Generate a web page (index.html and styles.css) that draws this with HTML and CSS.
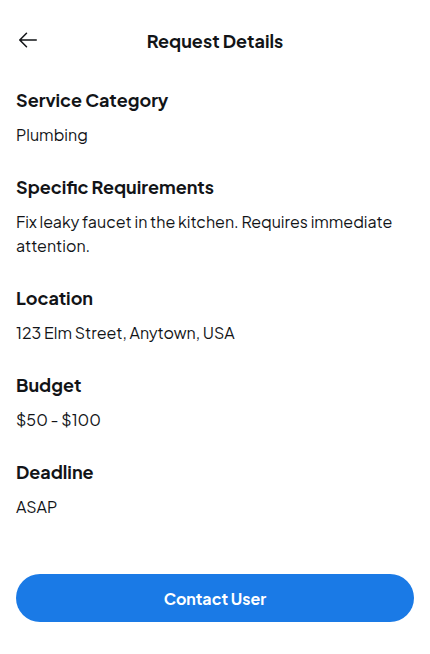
FILE: index.html
```html
<!DOCTYPE html>
<html lang="en">
<head>
<meta charset="utf-8">
<title>Request Details</title>
<link rel="stylesheet" href="styles.css">
</head>
<body>
<div class="page">
  <div class="main">
    <header class="header">
      <div class="back">
        <svg width="24" height="24" viewBox="0 0 256 256" fill="currentColor"><path d="M224,128a8,8,0,0,1-8,8H59.31l58.35,58.34a8,8,0,0,1-11.32,11.32l-72-72a8,8,0,0,1,0-11.32l72-72a8,8,0,0,1,11.32,11.32L59.31,120H216A8,8,0,0,1,224,128Z"/></svg>
      </div>
      <h2 class="title">Request Details</h2>
    </header>
    <h3 class="label">Service Category</h3>
    <p class="value">Plumbing</p>
    <h3 class="label">Specific Requirements</h3>
    <p class="value">Fix leaky faucet in the kitchen. Requires immediate attention.</p>
    <h3 class="label">Location</h3>
    <p class="value">123 Elm Street, Anytown, USA</p>
    <h3 class="label">Budget</h3>
    <p class="value">$50 - $100</p>
    <h3 class="label">Deadline</h3>
    <p class="value">ASAP</p>
  </div>
  <div class="footer">
    <div class="btn-wrap">
      <button class="btn">Contact User</button>
    </div>
    <div class="spacer"></div>
  </div>
</div>
</body>
</html>
```
FILE: styles.css
```css
* { box-sizing: border-box; }
html, body { margin: 0; padding: 0; background: #fff; }
body {
  font-family: "Plus Jakarta Sans", Inter, "Noto Sans", sans-serif;
  color: #121417;
}
.page {
  min-height: 100vh;
  display: flex;
  flex-direction: column;
  justify-content: space-between;
}
.header {
  display: flex;
  align-items: center;
  padding: 16px 16px 8px;
}
.back {
  width: 48px;
  height: 48px;
  display: flex;
  align-items: center;
  justify-content: flex-start;
  color: #121417;
}
.title {
  flex: 1;
  margin: 0;
  padding-right: 48px;
  text-align: center;
  font-size: 18px;
  font-weight: 700;
  line-height: 23px;
}
.label {
  margin: 0;
  padding: 16px 16px 8px;
  font-size: 18px;
  font-weight: 700;
  line-height: 23px;
}
.value {
  margin: 0;
  padding: 4px 16px 12px;
  font-size: 16px;
  font-weight: 400;
  line-height: 24px;
}
.btn-wrap {
  padding: 12px 16px;
}
.btn {
  display: block;
  width: 100%;
  height: 48px;
  border: 0;
  border-radius: 24px;
  background: #1a7ae6;
  color: #fff;
  font-family: inherit;
  font-size: 16px;
  font-weight: 700;
}
.spacer { height: 20px; }
```
